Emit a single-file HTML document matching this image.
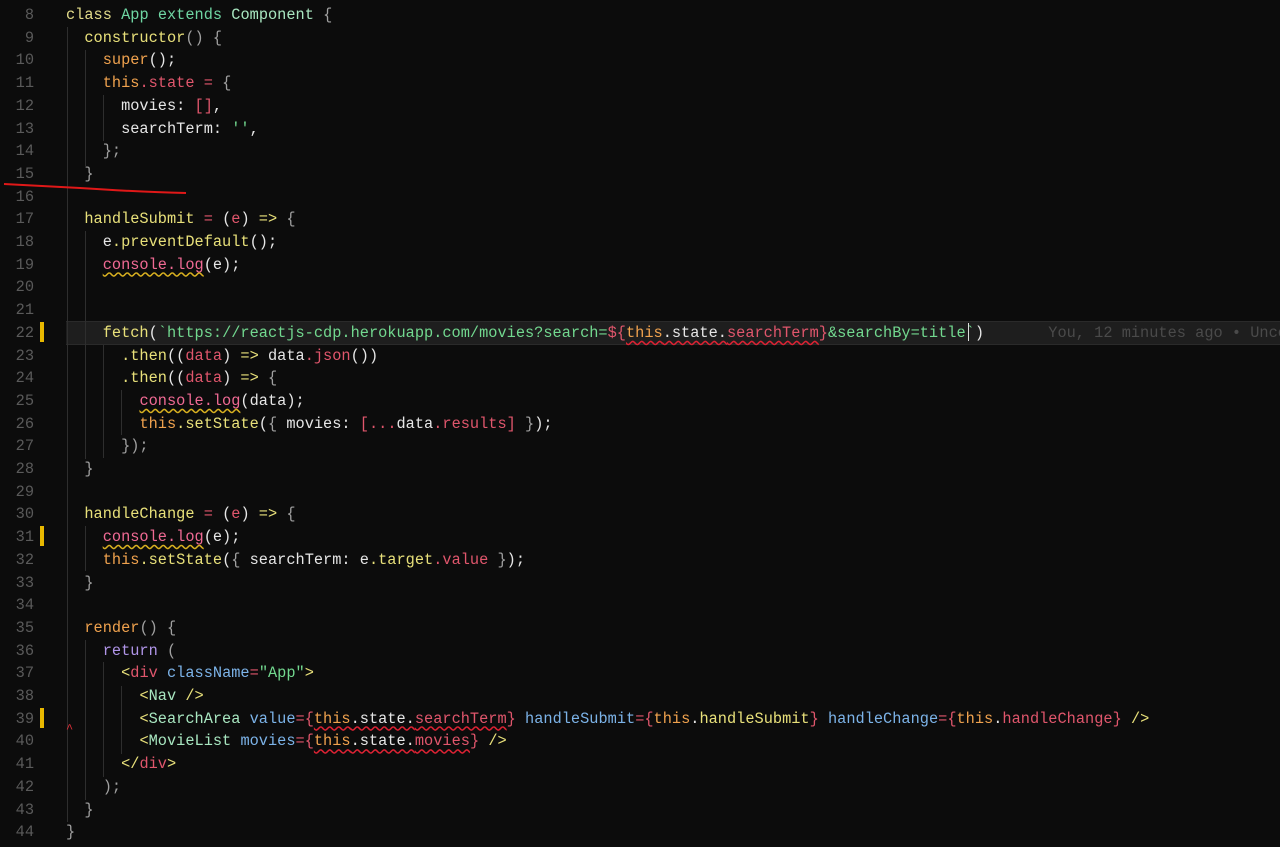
<!DOCTYPE html>
<html><head><meta charset="utf-8"><style>
body{margin:0;width:1280px;height:847px;background:#0c0c0c;overflow:hidden;position:relative;font-family:"Liberation Mono",monospace;font-size:15.3px}
.ln{position:absolute;left:0;width:34px;text-align:right;color:#5a5a5a;height:22.7px;line-height:22.7px}
.c{position:absolute;left:66px;white-space:pre;color:#e6e6e6;height:22.7px;line-height:22.7px}
.k{color:#e3dc8a}.g{color:#6fd6a3}.t{color:#a8e6c0}.y{color:#e8e07a}.o{color:#f0a24e}.r{color:#e0566c}.b{color:#a0a0a0}.s{color:#72d88f}.p{color:#f06a94}.bl{color:#7cb3e8}.pu{color:#b095e8}
.w{text-decoration:underline wavy #d23;text-underline-offset:3px}
.wy{text-decoration:underline wavy #d8b020;text-underline-offset:3px}
.guide{position:absolute;width:1px;background:#2e2e2e}
.mark{position:absolute;left:40px;width:4px;height:20px;background:#e8b800}
</style></head><body>
<div style="position:absolute;left:66px;top:321px;width:1214px;height:22px;background:#1e1e1e;border-top:1px solid #2a2a2a;border-bottom:1px solid #2a2a2a"></div>
<div class="guide" style="left:67px;top:27px;height:795px"></div>
<div class="guide" style="left:85px;top:50px;height:116px"></div>
<div class="guide" style="left:103px;top:95px;height:46px"></div>
<div class="guide" style="left:85px;top:231px;height:228px"></div>
<div class="guide" style="left:103px;top:345px;height:113px"></div>
<div class="guide" style="left:121px;top:390px;height:45px"></div>
<div class="guide" style="left:85px;top:526px;height:45px"></div>
<div class="guide" style="left:85px;top:640px;height:160px"></div>
<div class="guide" style="left:103px;top:662px;height:115px"></div>
<div class="guide" style="left:121px;top:686px;height:68px"></div>
<div class="mark" style="top:322px"></div>
<div class="mark" style="top:526px"></div>
<div class="mark" style="top:708px"></div>
<div style="position:absolute;left:66px;top:722px;color:#e0303a;font-size:12px">^</div>
<svg style="position:absolute;left:0;top:175px" width="200" height="25"><path d="M4 9 Q40 11 80 13 Q140 17 186 18" stroke="#e01818" stroke-width="2" fill="none"/></svg>
<div id="lines"></div>
<script></script>
<div class="ln" style="top:4px">8</div><div class="c" style="top:4px"><span class="k">class</span> <span class="g">App</span> <span class="g">extends</span> <span class="t">Component</span> <span class="b">{</span></div>
<div class="ln" style="top:26.7px">9</div><div class="c" style="top:26.7px">  <span class="y">constructor</span><span class="b">() {</span></div>
<div class="ln" style="top:49.4px">10</div><div class="c" style="top:49.4px">    <span class="o">super</span>();</div>
<div class="ln" style="top:72.1px">11</div><div class="c" style="top:72.1px">    <span class="o">this</span><span class="r">.state</span> <span class="r">=</span> <span class="b">{</span></div>
<div class="ln" style="top:94.8px">12</div><div class="c" style="top:94.8px">      movies: <span class="r">[]</span>,</div>
<div class="ln" style="top:117.5px">13</div><div class="c" style="top:117.5px">      searchTerm: <span class="s">''</span>,</div>
<div class="ln" style="top:140.2px">14</div><div class="c" style="top:140.2px">    <span class="b">};</span></div>
<div class="ln" style="top:162.9px">15</div><div class="c" style="top:162.9px">  <span class="b">}</span></div>
<div class="ln" style="top:185.6px">16</div>
<div class="ln" style="top:208.3px">17</div><div class="c" style="top:208.3px">  <span class="y">handleSubmit</span> <span class="r">=</span> (<span class="r">e</span>) <span class="y">=&gt;</span> <span class="b">{</span></div>
<div class="ln" style="top:231px">18</div><div class="c" style="top:231px">    e<span class="y">.preventDefault</span>();</div>
<div class="ln" style="top:253.7px">19</div><div class="c" style="top:253.7px">    <span class="p wy">console.log</span>(e);</div>
<div class="ln" style="top:276.4px">20</div>
<div class="ln" style="top:299.1px">21</div>
<div class="ln" style="top:321.8px">22</div><div class="c" style="top:321.8px">    <span class="y">fetch</span>(<span class="s">`https://reactjs-cdp.herokuapp.com/movies?search=</span><span class="r">${</span><span class="o w">this</span><span class="w">.state.</span><span class="r w">searchTerm</span><span class="r">}</span><span class="s">&amp;searchBy=title`</span>)       <span style="color:#4a4a4a">You, 12 minutes ago • Unco</span></div>
<div class="ln" style="top:344.5px">23</div><div class="c" style="top:344.5px">      <span class="y">.then</span>((<span class="r">data</span>) <span class="y">=&gt;</span> data<span class="r">.json</span>())</div>
<div class="ln" style="top:367.2px">24</div><div class="c" style="top:367.2px">      <span class="y">.then</span>((<span class="r">data</span>) <span class="y">=&gt;</span> <span class="b">{</span></div>
<div class="ln" style="top:389.9px">25</div><div class="c" style="top:389.9px">        <span class="p wy">console.log</span>(data);</div>
<div class="ln" style="top:412.6px">26</div><div class="c" style="top:412.6px">        <span class="o">this</span><span class="y">.setState</span>(<span class="b">{</span> movies: <span class="r">[...</span>data<span class="r">.results]</span> <span class="b">}</span>);</div>
<div class="ln" style="top:435.3px">27</div><div class="c" style="top:435.3px">      <span class="b">});</span></div>
<div class="ln" style="top:458px">28</div><div class="c" style="top:458px">  <span class="b">}</span></div>
<div class="ln" style="top:480.7px">29</div>
<div class="ln" style="top:503.4px">30</div><div class="c" style="top:503.4px">  <span class="y">handleChange</span> <span class="r">=</span> (<span class="r">e</span>) <span class="y">=&gt;</span> <span class="b">{</span></div>
<div class="ln" style="top:526.1px">31</div><div class="c" style="top:526.1px">    <span class="p wy">console.log</span>(e);</div>
<div class="ln" style="top:548.8px">32</div><div class="c" style="top:548.8px">    <span class="o">this</span><span class="y">.setState</span>(<span class="b">{</span> searchTerm: e<span class="y">.target</span><span class="r">.value</span> <span class="b">}</span>);</div>
<div class="ln" style="top:571.5px">33</div><div class="c" style="top:571.5px">  <span class="b">}</span></div>
<div class="ln" style="top:594.2px">34</div>
<div class="ln" style="top:616.9px">35</div><div class="c" style="top:616.9px">  <span class="o">render</span><span class="b">() {</span></div>
<div class="ln" style="top:639.6px">36</div><div class="c" style="top:639.6px">    <span class="pu">return</span> <span class="b">(</span></div>
<div class="ln" style="top:662.3px">37</div><div class="c" style="top:662.3px">      <span class="y">&lt;</span><span class="r">div</span> <span class="bl">className</span><span class="r">=</span><span class="s">"App"</span><span class="y">&gt;</span></div>
<div class="ln" style="top:685px">38</div><div class="c" style="top:685px">        <span class="y">&lt;</span><span class="t">Nav</span> <span class="y">/&gt;</span></div>
<div class="ln" style="top:707.7px">39</div><div class="c" style="top:707.7px">        <span class="y">&lt;</span><span class="t">SearchArea</span> <span class="bl">value</span><span class="r">={</span><span class="o w">this</span><span class="w">.state.</span><span class="r w">searchTerm</span><span class="r">}</span> <span class="bl">handleSubmit</span><span class="r">={</span><span class="o">this</span>.<span class="y">handleSubmit</span><span class="r">}</span> <span class="bl">handleChange</span><span class="r">={</span><span class="o">this</span>.<span class="r">handleChange</span><span class="r">}</span> <span class="y">/&gt;</span></div>
<div class="ln" style="top:730.4px">40</div><div class="c" style="top:730.4px">        <span class="y">&lt;</span><span class="t">MovieList</span> <span class="bl">movies</span><span class="r">={</span><span class="o w">this</span><span class="w">.state.</span><span class="r w">movies</span><span class="r">}</span> <span class="y">/&gt;</span></div>
<div class="ln" style="top:753.1px">41</div><div class="c" style="top:753.1px">      <span class="y">&lt;/</span><span class="r">div</span><span class="y">&gt;</span></div>
<div class="ln" style="top:775.8px">42</div><div class="c" style="top:775.8px">    <span class="b">);</span></div>
<div class="ln" style="top:798.5px">43</div><div class="c" style="top:798.5px">  <span class="b">}</span></div>
<div class="ln" style="top:821.2px">44</div><div class="c" style="top:821.2px"><span class="b">}</span></div>
<div style="position:absolute;left:968px;top:323px;width:1px;height:18px;background:#ddd"></div>
</body></html>
